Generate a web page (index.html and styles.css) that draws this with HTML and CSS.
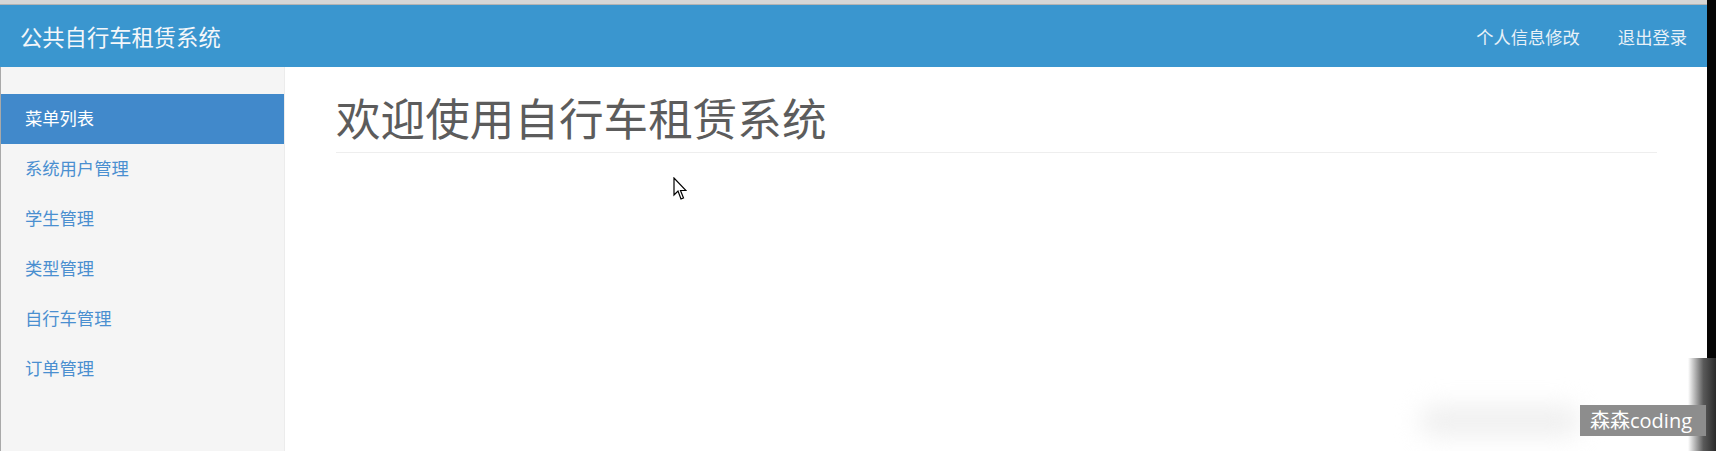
FILE: index.html
```html
<!DOCTYPE html>
<html lang="zh-CN">
<head>
<meta charset="utf-8">
<title>公共自行车租赁系统</title>
<link rel="stylesheet" href="styles.css">
</head>
<body>
<div class="screen">
  <div class="app">
    <div class="topstrip"></div>
    <header class="navbar">
      <a class="brand" href="#">公共自行车租赁系统</a>
      <nav class="nav-right">
        <a href="#">个人信息修改</a>
        <a href="#">退出登录</a>
      </nav>
    </header>
    <div class="body">
      <aside class="sidebar">
        <ul class="menu">
          <li class="active"><a href="#">菜单列表</a></li>
          <li><a href="#">系统用户管理</a></li>
          <li><a href="#">学生管理</a></li>
          <li><a href="#">类型管理</a></li>
          <li><a href="#">自行车管理</a></li>
          <li><a href="#">订单管理</a></li>
        </ul>
      </aside>
      <main class="main">
        <h1 class="page-header">欢迎使用自行车租赁系统</h1>
        <svg class="cursor" width="14" height="24" viewBox="0 0 14 24" aria-hidden="true">
          <path d="M1 1 L1 18 L5 14 L8 22 L10.5 21 L7.5 13.5 L13 13.5 Z" fill="#fff" stroke="#000" stroke-width="1.2" stroke-linejoin="miter"/>
        </svg>
      </main>
    </div>
  </div>
  <div class="edge"></div>
  <div class="blur-blob"></div>
  <div class="edge-fade"></div>
  <div class="watermark">森森coding</div>
</div>
</body>
</html>
```
FILE: styles.css
```css
html, body {
  margin: 0;
  padding: 0;
  height: 100%;
  background: #fff;
}

body {
  font-family: "Noto Sans CJK SC", "Noto Sans", sans-serif;
  overflow: hidden;
}

a {
  text-decoration: none;
}

.screen {
  position: relative;
  display: flex;
  width: 1716px;
  height: 451px;
  overflow: hidden;
}

.app {
  flex: 1;
  display: flex;
  flex-direction: column;
  min-width: 0;
}

.edge {
  width: 9px;
  background: #050505;
}

.topstrip {
  height: 4px;
  background: #d6d6d6;
  border-bottom: 1px solid #b3b3b3;
}

.navbar {
  height: 62px;
  background: #3a96cf;
  display: flex;
  align-items: center;
  justify-content: space-between;
  padding: 0 20px;
}

.brand {
  color: #f4f7fa;
  font-size: 22.3px;
  line-height: 1;
  margin-top: 1px;
}

.nav-right {
  display: flex;
  gap: 38px;
  margin-top: 1px;
}

.nav-right a {
  color: #e8f1f8;
  font-size: 17.3px;
  line-height: 1;
}

.body {
  flex: 1;
  display: flex;
  min-height: 0;
}

.sidebar {
  width: 283px;
  background: #f5f5f5;
  border-left: 1px solid #a9a9a9;
  border-right: 1px solid #ececec;
  padding-top: 27px;
}

.menu {
  list-style: none;
  margin: 0;
  padding: 0;
}

.menu li a {
  display: flex;
  align-items: center;
  height: 50px;
  box-sizing: border-box;
  padding: 0 0 4px 24px;
  font-size: 17.3px;
  color: #4a8fd0;
}

.menu li.active a {
  background: #4189cb;
  color: #fff;
}

.main {
  position: relative;
  flex: 1;
  padding: 25px 50px 0 51px;
}

.page-header {
  margin: 0;
  font-size: 44.6px;
  font-weight: 400;
  line-height: 49px;
  color: #5c5c5c;
  padding-bottom: 11px;
  border-bottom: 1px solid #eeeeee;
}

.cursor {
  position: absolute;
  left: 388px;
  top: 110px;
}

.blur-blob {
  position: absolute;
  left: 1420px;
  top: 406px;
  width: 160px;
  height: 30px;
  background: #efefef;
  filter: blur(12px);
  border-radius: 14px;
}

.edge-fade {
  position: absolute;
  right: 0;
  top: 358px;
  width: 28px;
  height: 93px;
  background: linear-gradient(to right, rgba(80, 80, 80, 0), #5a5a5a 55%, #2a2a2a);
}

.watermark {
  position: absolute;
  left: 1580px;
  top: 405px;
  width: 126px;
  height: 31px;
  background: #8d8d8d;
  color: #fff;
  font-family: "Open Sans", "Noto Sans CJK SC", sans-serif;
  font-size: 20px;
  line-height: 31px;
  padding-left: 10px;
  box-sizing: border-box;
  white-space: nowrap;
}
```
